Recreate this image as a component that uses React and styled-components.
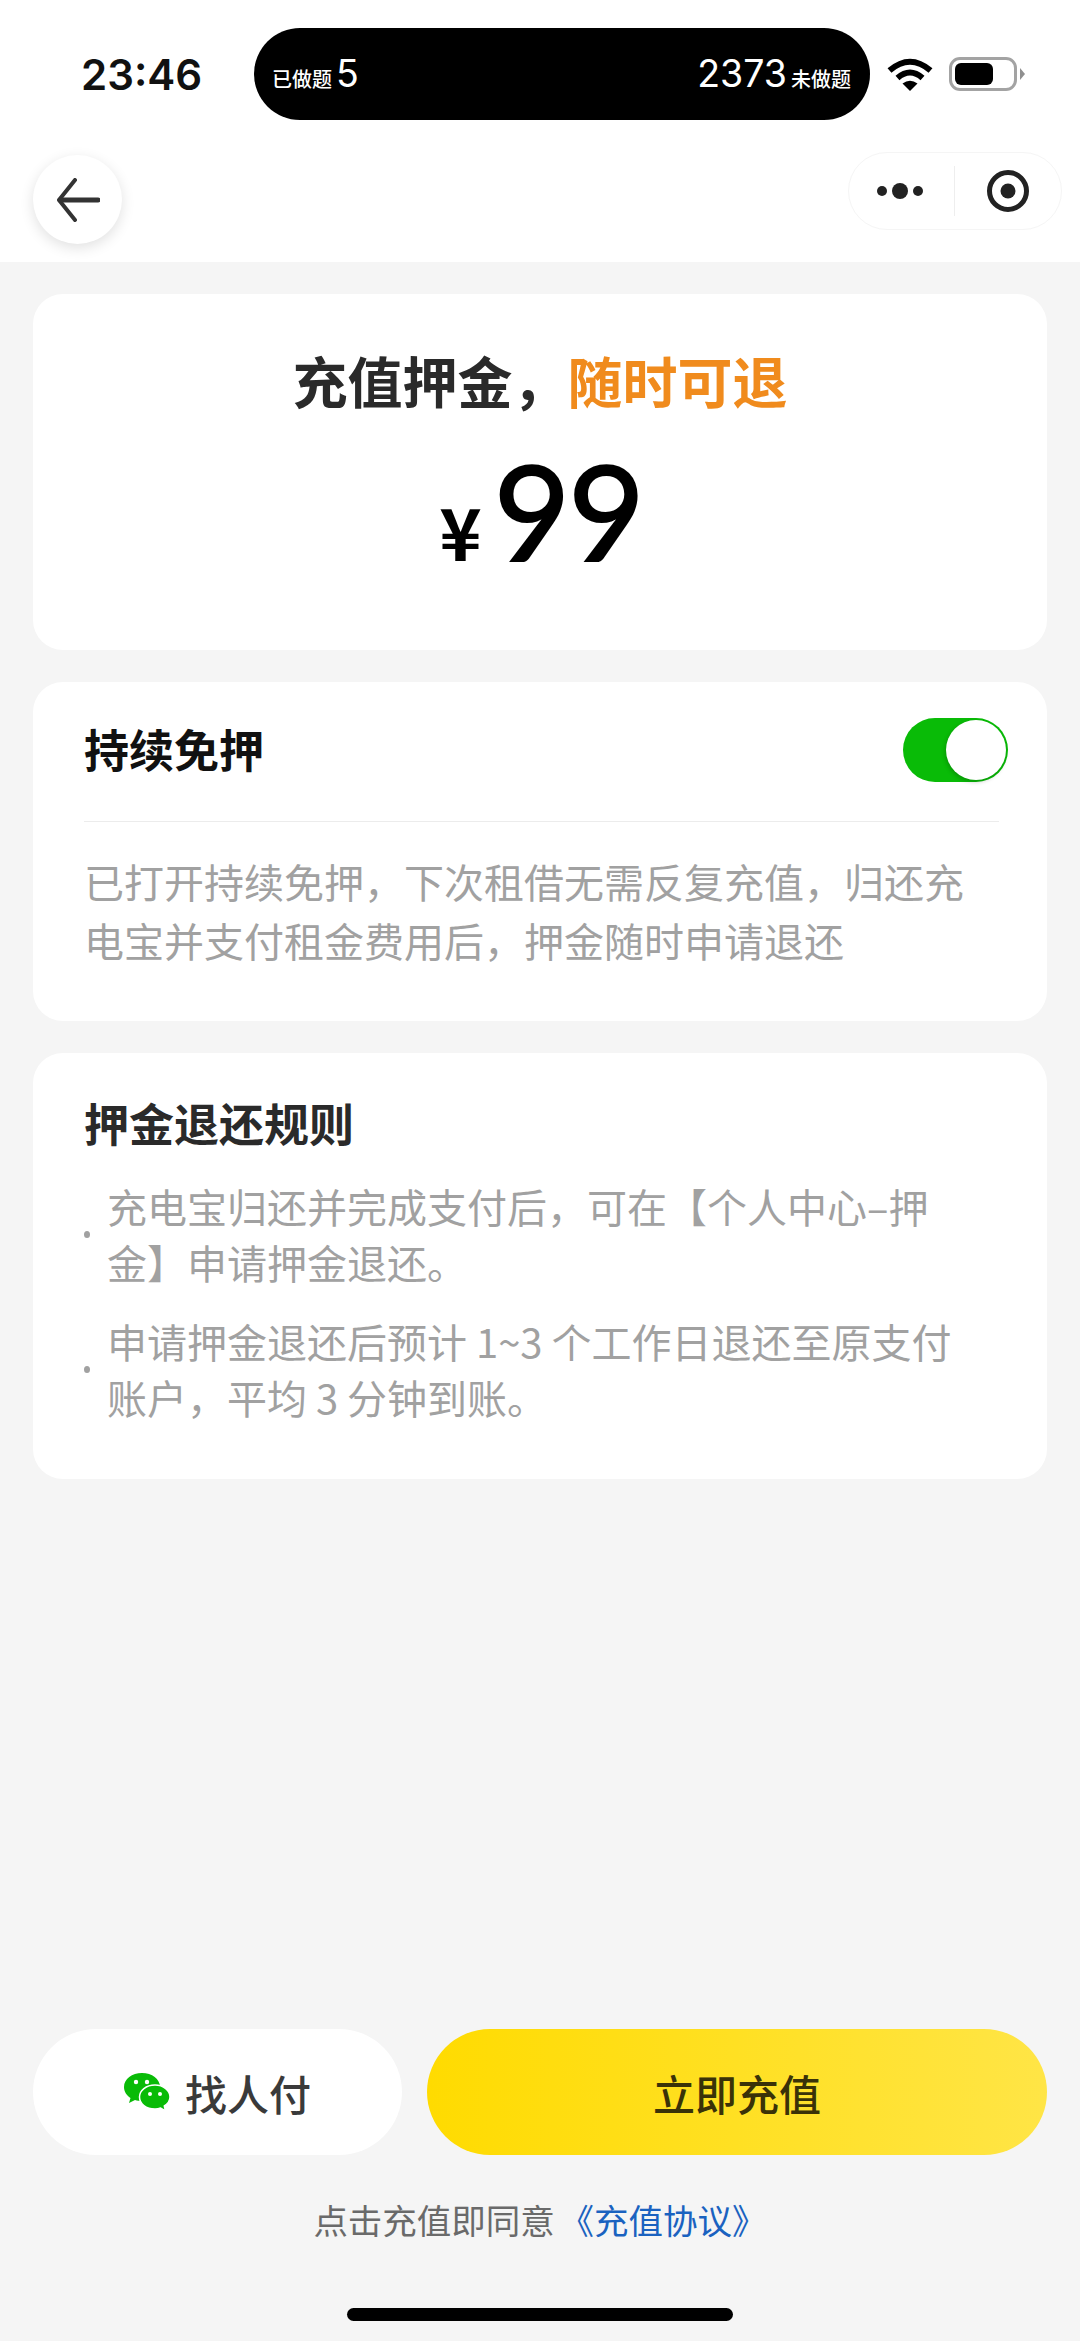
import React from "react";
import styled, { createGlobalStyle } from "styled-components";

const GlobalStyle = createGlobalStyle`
  * {
    box-sizing: border-box;
  }
  html, body {
    margin: 0;
    padding: 0;
    background: #f5f5f5;
  }
  body {
    font-family: "Noto Sans CJK SC", "Liberation Sans", sans-serif;
  }
`;

const Page = styled.div`
  width: 1080px;
  height: 2341px;
  display: flex;
  flex-direction: column;
  overflow: hidden;
  background: #f5f5f5;
`;

const Header = styled.header`
  height: 262px;
  padding-top: 28px;
  flex-shrink: 0;
  background: #fff;
`;

const StatusBar = styled.div`
  height: 92px;
  padding-left: 81px;
  display: flex;
  align-items: center;
`;

const Time = styled.div`
  width: 173px;
  font-family: Inter, "Liberation Sans", sans-serif;
  font-size: 42px;
  font-weight: 600;
  color: #111;
`;

const Island = styled.div`
  width: 616px;
  height: 92px;
  padding: 0 19px 0 18px;
  border-radius: 46px;
  background: #000;
  color: #fff;
  display: flex;
  align-items: center;
  justify-content: space-between;
`;

const IslandGroup = styled.div`
  display: flex;
  align-items: baseline;
  gap: 4px;
`;

const IslandLabel = styled.span`
  font-size: 20px;
  font-weight: 500;
`;

const IslandCount = styled.span`
  font-family: Inter, "Liberation Sans", sans-serif;
  font-size: 37.5px;
  font-weight: 400;
  line-height: 1;
`;

const StatusIcons = styled.div`
  margin-left: 17px;
  display: flex;
  align-items: center;
  gap: 16px;
`;

const Battery = styled.div`
  position: relative;
  width: 68px;
  height: 34px;
  padding: 3px;
  border: 3px solid #a3a3a3;
  border-radius: 11px;

  &::before {
    content: "";
    display: block;
    width: 38px;
    height: 22px;
    border-radius: 6px;
    background: #000;
  }

  &::after {
    content: "";
    position: absolute;
    right: -11px;
    top: 8px;
    width: 5px;
    height: 12px;
    background: #8f8f8f;
    clip-path: polygon(0 0, 100% 50%, 0 100%);
  }
`;

const NavBar = styled.div`
  padding: 32px 18px 0 33px;
  display: flex;
  align-items: flex-start;
  justify-content: space-between;
`;

const BackButton = styled.div`
  width: 89px;
  height: 89px;
  margin-top: 3px;
  border-radius: 50%;
  background: #fff;
  box-shadow: 0 4px 14px rgba(0, 0, 0, 0.12);
  display: flex;
  align-items: center;
  justify-content: center;
`;

const Capsule = styled.div`
  width: 214px;
  height: 78px;
  border: 1px solid #f5f5f5;
  border-radius: 39px;
  background: #fff;
  display: flex;
  align-items: center;
`;

const CapsuleCell = styled.div`
  flex: ${(p) => p.$grow};
  height: 50px;
  display: flex;
  align-items: center;
  justify-content: center;
  border-left: ${(p) => (p.$divided ? "1px solid #eeeeee" : "none")};
`;

const Main = styled.main`
  padding: 32px 33px 0;
  display: flex;
  flex-direction: column;
  gap: 32px;
`;

const Card = styled.section`
  padding: ${(p) => p.$padding};
  border-radius: 30px;
  background: #fff;
`;

const Headline = styled.h1`
  margin: 0;
  font-size: 55px;
  font-weight: 600;
  line-height: 76px;
  text-align: center;
  color: #2a2a2a;
`;

const Highlight = styled.span`
  color: #f08b1d;
`;

const Amount = styled.div`
  margin-top: 28px;
  padding-left: 2px;
  display: flex;
  align-items: baseline;
  justify-content: center;
  gap: 12px;
  color: #000;
`;

const Currency = styled.span`
  font-size: 72px;
  font-weight: 700;
  line-height: 130px;
`;

const AmountValue = styled.span`
  font-family: Lato, "Liberation Sans", sans-serif;
  font-size: 132px;
  line-height: 130px;
  letter-spacing: -2px;
  -webkit-text-stroke: 2px #000;
`;

const ToggleRow = styled.div`
  height: 105px;
  display: flex;
  align-items: flex-start;
  justify-content: space-between;
  border-bottom: 1px solid #ececec;
`;

const CardTitle = styled.h2`
  margin: 0;
  font-size: 45px;
  font-weight: 600;
  line-height: 64px;
  color: ${(p) => p.$color};
`;

const Toggle = styled.div`
  width: 105px;
  height: 64px;
  margin: 1px -9px 0 0;
  padding: 2px;
  border-radius: 32px;
  background: #09bb07;
  display: flex;
  justify-content: flex-end;
`;

const ToggleThumb = styled.div`
  width: 60px;
  height: 60px;
  border-radius: 50%;
  background: #fff;
  box-shadow: -1px 2px 4px rgba(0, 0, 0, 0.2);
`;

const Description = styled.p`
  margin: 30px 0 0;
  font-size: 40px;
  line-height: 59px;
  color: #a1a1a1;
`;

const RuleList = styled.ul`
  margin: 23px 0 0;
  padding: 0;
  list-style: none;
  display: flex;
  flex-direction: column;
  gap: 23px;
`;

const RuleItem = styled.li`
  display: flex;
  align-items: center;
  gap: 17px;
  font-size: 40px;
  line-height: 56px;
  color: #a1a1a1;
`;

const RuleDot = styled.span`
  width: 6px;
  height: 7px;
  flex-shrink: 0;
  border-radius: 50%;
  background: #a1a1a1;
`;

const Footer = styled.footer`
  margin-top: auto;
  padding: 0 33px 20px;
  display: flex;
  flex-direction: column;
  align-items: center;
`;

const ButtonRow = styled.div`
  width: 100%;
  display: flex;
  gap: 25px;
`;

const ActionButton = styled.button`
  flex: ${(p) => (p.$primary ? "0 0 620px" : "0 0 369px")};
  height: 126px;
  padding: 0;
  border: 0;
  border-radius: 63px;
  background: ${(p) =>
    p.$primary ? "linear-gradient(90deg, #ffdb00, #ffe546)" : "#fff"};
  color: ${(p) => (p.$primary ? "#3a3208" : "#3a3a3a")};
  font-family: inherit;
  font-size: 42px;
  font-weight: 500;
  display: flex;
  align-items: center;
  justify-content: center;
  gap: 15px;
`;

const Agreement = styled.div`
  margin-top: 39px;
  font-size: 34.5px;
  line-height: 50px;
  word-spacing: -3px;
  color: #6a6a6a;
`;

const AgreementLink = styled.span`
  color: #1a62c0;
`;

const HomeIndicator = styled.div`
  width: 386px;
  height: 13px;
  margin-top: 64px;
  border-radius: 7px;
  background: #000;
`;

const WifiIcon = () => (
  <svg width="46" height="34" viewBox="0 0 46 34">
    <g fill="none" stroke="#000" strokeWidth="6">
      <path d="M2.5 13.5 Q23 -4 43.5 13.5" />
      <path d="M10.5 21 Q23 10 35.5 21" />
    </g>
    <path d="M15.5 26.5 Q23 21 30.5 26.5 L23 34 Z" fill="#000" />
  </svg>
);

const BackIcon = () => (
  <svg width="44" height="44" viewBox="0 0 44 44" fill="none">
    <path
      d="M19 2 L3 22 L19 42"
      stroke="#333"
      strokeWidth="4"
      strokeLinecap="round"
      strokeLinejoin="round"
    />
    <path d="M4 22 H42" stroke="#333" strokeWidth="5" strokeLinecap="round" />
  </svg>
);

const MoreIcon = () => (
  <svg width="48" height="20" viewBox="0 0 48 20" fill="#222">
    <circle cx="5" cy="10" r="5" />
    <circle cx="23" cy="10" r="8" />
    <circle cx="41" cy="10" r="5" />
  </svg>
);

const TargetIcon = () => (
  <svg width="44" height="44" viewBox="0 0 44 44">
    <circle cx="22" cy="22" r="18.5" fill="none" stroke="#222" strokeWidth="5" />
    <circle cx="22" cy="22" r="7.5" fill="#222" />
  </svg>
);

const WechatIcon = () => (
  <svg width="46" height="38" viewBox="0 0 46 38">
    <path
      d="M18 0 C8 0 0 6 0 14 C0 18.5 2.5 22.3 6.5 25 L5 30 L11 27 C13 27.7 15.5 28 18 28 C28 28 36 22 36 14 C36 6 28 0 18 0 Z"
      fill="#09bb07"
    />
    <path
      d="M31 12 C22 12 15.5 17.6 15.5 24 C15.5 30.8 22 36 31 36 C33 36 35 35.7 36.6 35 L41.5 38 L40.3 33 C43.7 30.8 46 27.6 46 24 C46 17.6 39.5 12 31 12 Z"
      fill="#09bb07"
      stroke="#fff"
      strokeWidth="1.5"
    />
    <circle cx="12" cy="9" r="2.2" fill="#fff" />
    <circle cx="23" cy="9" r="2.2" fill="#fff" />
    <circle cx="26" cy="21" r="2" fill="#fff" />
    <circle cx="36" cy="21" r="2" fill="#fff" />
  </svg>
);

export default function App() {
  return (
    <Page>
      <GlobalStyle />
      <Header>
        <StatusBar>
          <Time>23:46</Time>
          <Island>
            <IslandGroup>
              <IslandLabel>已做题</IslandLabel>
              <IslandCount>5</IslandCount>
            </IslandGroup>
            <IslandGroup>
              <IslandCount>2373</IslandCount>
              <IslandLabel>未做题</IslandLabel>
            </IslandGroup>
          </Island>
          <StatusIcons>
            <WifiIcon />
            <Battery />
          </StatusIcons>
        </StatusBar>
        <NavBar>
          <BackButton>
            <BackIcon />
          </BackButton>
          <Capsule>
            <CapsuleCell $grow="106">
              <MoreIcon />
            </CapsuleCell>
            <CapsuleCell $grow="108" $divided>
              <TargetIcon />
            </CapsuleCell>
          </Capsule>
        </NavBar>
      </Header>

      <Main>
        <Card $padding="47px 0 55px">
          <Headline>
            充值押金，<Highlight>随时可退</Highlight>
          </Headline>
          <Amount>
            <Currency>¥</Currency>
            <AmountValue>99</AmountValue>
          </Amount>
        </Card>

        <Card $padding="35px 48px 51px 51px">
          <ToggleRow>
            <CardTitle $color="#111">持续免押</CardTitle>
            <Toggle>
              <ToggleThumb />
            </Toggle>
          </ToggleRow>
          <Description>
            已打开持续免押，下次租借无需反复充值，归还充电宝并支付租金费用后，押金随时申请退还
          </Description>
        </Card>

        <Card $padding="38px 48px 54px 51px">
          <CardTitle $color="#2a2a2a">押金退还规则</CardTitle>
          <RuleList>
            <RuleItem>
              <RuleDot />
              <span>
                充电宝归还并完成支付后，可在【个人中心–押
                <br />
                金】申请押金退还。
              </span>
            </RuleItem>
            <RuleItem>
              <RuleDot />
              <span>
                申请押金退还后预计 1~3 个工作日退还至原支付
                <br />
                账户，平均 3 分钟到账。
              </span>
            </RuleItem>
          </RuleList>
        </Card>
      </Main>

      <Footer>
        <ButtonRow>
          <ActionButton>
            <WechatIcon />
            找人付
          </ActionButton>
          <ActionButton $primary>立即充值</ActionButton>
        </ButtonRow>
        <Agreement>
          点击充值即同意 <AgreementLink>《充值协议》</AgreementLink>
        </Agreement>
        <HomeIndicator />
      </Footer>
    </Page>
  );
}
